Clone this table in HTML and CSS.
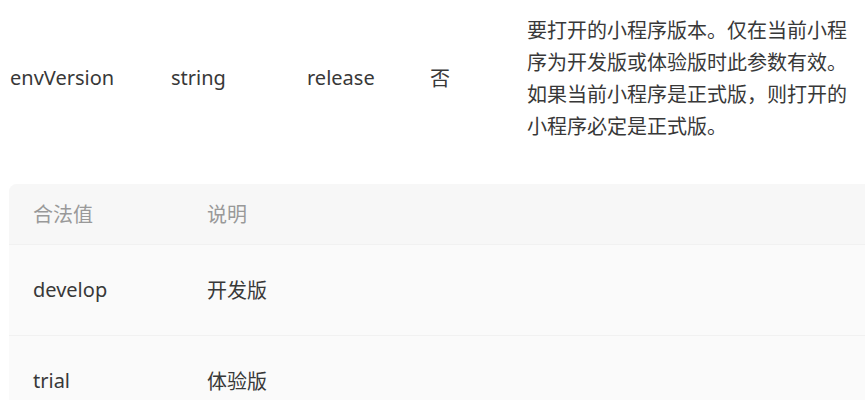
FILE: index.html
```html
<!DOCTYPE html>
<html lang="zh-CN">
<head>
    <meta charset="UTF-8">
    <meta name="viewport" content="width=device-width, initial-scale=1.0">
    <title>envVersion</title>
    <link rel="stylesheet" href="styles.css">
</head>
<body>
    <!-- Parameter row -->
    <div class="param-row">
        <div class="param-name">envVersion</div>
        <div class="param-type">string</div>
        <div class="param-default">release</div>
        <div class="param-required">否</div>
        <div class="param-desc">要打开的小程序版本。仅在当前小程序为开发版或体验版时此参数有效。如果当前小程序是正式版，则打开的小程序必定是正式版。</div>
    </div>

    <!-- Legal values -->
    <div class="values-table">
        <div class="values-row values-head">
            <div class="values-key">合法值</div>
            <div class="values-text">说明</div>
        </div>
        <div class="values-row">
            <div class="values-key">develop</div>
            <div class="values-text">开发版</div>
        </div>
        <div class="values-row">
            <div class="values-key">trial</div>
            <div class="values-text">体验版</div>
        </div>
    </div>
</body>
</html>
```

FILE: styles.css
```css
body {
    margin: 0;
    background: #ffffff;
    color: #383838;
    font-family: "Noto Sans", "Noto Sans CJK SC", sans-serif;
    font-size: 20px;
}

.param-row {
    display: grid;
    grid-template-columns: 161px 136px 123px 97px 1fr;
    align-items: center;
    padding: 14px 20px 0 10px;
    height: 129px;
}

.param-name,
.param-type,
.param-default,
.param-required {
    padding-bottom: 3px;
}

.param-desc {
    line-height: 32px;
    width: 320px;
}

.values-table {
    margin: 41px 0 0 9px;
    background: #fafafa;
    border-radius: 8px 0 0 0;
    overflow: hidden;
}

.values-row {
    display: flex;
    align-items: center;
    height: 88px;
    padding: 0 0 2px 24px;
    border-bottom: 1px solid #f1f1f1;
}

.values-head {
    height: 58px;
    background: #f7f7f7;
    color: #999999;
}

.values-key {
    width: 174px;
}
```
